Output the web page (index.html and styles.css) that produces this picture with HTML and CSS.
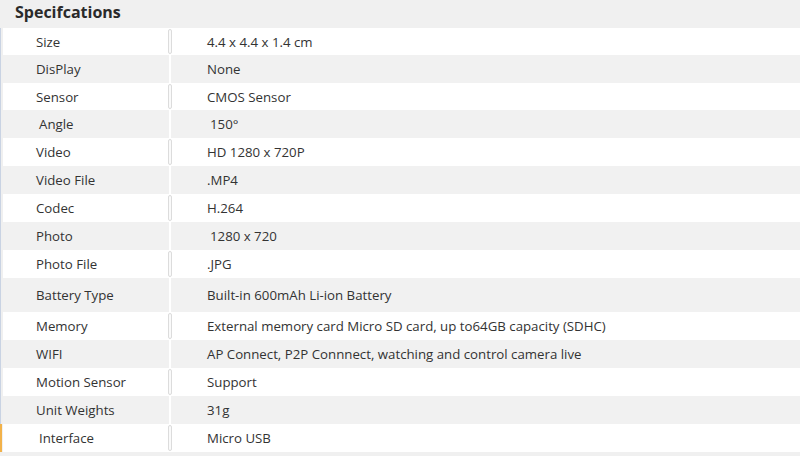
FILE: index.html
```html
<!DOCTYPE html>
<html>
<head>
<meta charset="utf-8">
<link rel="stylesheet" href="styles.css">
</head>
<body>
<div class="sheet">
  <div class="title">Specifcations</div>
  <div class="table">
    <div class="row w h27"><span class="edge"></span><span class="label">Size</span><span class="div"></span><span class="value">4.4 x 4.4 x 1.4 cm</span></div>
    <div class="row g"><span class="edge"></span><span class="label">DisPlay</span><span class="div"></span><span class="value">None</span></div>
    <div class="row w h27"><span class="edge"></span><span class="label">Sensor</span><span class="div"></span><span class="value">CMOS Sensor</span></div>
    <div class="row g"><span class="edge"></span><span class="label pad">Angle</span><span class="div"></span><span class="value pad">150°</span></div>
    <div class="row w"><span class="edge"></span><span class="label">Video</span><span class="div"></span><span class="value">HD 1280 x 720P</span></div>
    <div class="row g"><span class="edge"></span><span class="label">Video File</span><span class="div"></span><span class="value">.MP4</span></div>
    <div class="row w"><span class="edge"></span><span class="label">Codec</span><span class="div"></span><span class="value">H.264</span></div>
    <div class="row g"><span class="edge"></span><span class="label">Photo</span><span class="div"></span><span class="value pad">1280 x 720</span></div>
    <div class="row w"><span class="edge"></span><span class="label">Photo File</span><span class="div"></span><span class="value">.JPG</span></div>
    <div class="row g tall"><span class="edge"></span><span class="label">Battery Type</span><span class="div"></span><span class="value">Built-in 600mAh Li-ion Battery</span></div>
    <div class="row w"><span class="edge"></span><span class="label">Memory</span><span class="div"></span><span class="value">External memory card Micro SD card, up to64GB capacity (SDHC)</span></div>
    <div class="row g"><span class="edge"></span><span class="label">WIFI</span><span class="div"></span><span class="value">AP Connect, P2P Connnect, watching and control camera live</span></div>
    <div class="row w"><span class="edge"></span><span class="label">Motion Sensor</span><span class="div"></span><span class="value">Support</span></div>
    <div class="row g"><span class="edge"></span><span class="label">Unit Weights</span><span class="div"></span><span class="value">31g</span></div>
    <div class="row w"><span class="edge orange"></span><span class="label pad">Interface</span><span class="div"></span><span class="value">Micro USB</span></div>
  </div>
</div>
</body>
</html>
```

FILE: styles.css
```css
html, body {
  margin: 0;
  padding: 0;
  background: #f0f0f0;
}
body {
  width: 800px;
  height: 456px;
  overflow: hidden;
  font-family: "Open Sans", "Noto Sans", sans-serif;
  color: #333;
}
.sheet {
  display: flex;
  flex-direction: column;
}
.title {
  height: 28px;
  line-height: 24px;
  padding-left: 15px;
  font-size: 16px;
  font-weight: 700;
  color: #2a2a2a;
  background: #f0f0f0;
}
.table {
  display: flex;
  flex-direction: column;
}
.row {
  display: grid;
  grid-template-columns: 3px 165px 4px 1fr;
  height: 28px;
  align-items: center;
  font-size: 13.25px;
}
.row.h27 { height: 27px; }
.row.tall { height: 34px; }
.row.w { background: #ffffff; }
.row.g { background: #f1f1f1; }
.edge {
  align-self: stretch;
  background: #f0f0f0;
  border-left: 1px solid #c9d3e3;
  box-sizing: border-box;
}
.edge.orange {
  border-left-color: #f2b24a;
  border-left-width: 2px;
}
.label {
  padding-left: 33px;
  white-space: nowrap;
}
.value {
  padding-left: 35px;
  white-space: nowrap;
}
.label.pad { padding-left: 36px; }
.value.pad { padding-left: 38px; }
.div {
  align-self: stretch;
  box-sizing: border-box;
}
.row.w .div {
  margin: 1px 0;
  border: 1px solid #dcdcdc;
  border-radius: 2px;
  background: #fafafa;
}
.row.g .div {
  background: linear-gradient(to right, transparent 1px, #ffffff 1px, #ffffff 3px, transparent 3px);
}
```
